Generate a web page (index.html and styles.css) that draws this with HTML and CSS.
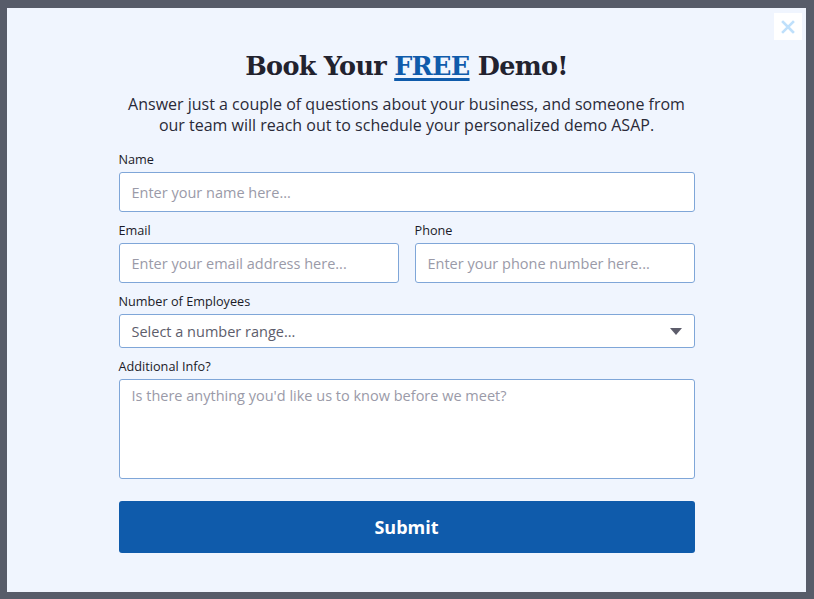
FILE: index.html
```html
<!DOCTYPE html>
<html lang="en">
<head>
  <meta charset="utf-8">
  <meta name="viewport" content="width=device-width, initial-scale=1">
  <title>Book Your FREE Demo</title>
  <link rel="stylesheet" href="styles.css">
</head>
<body>

<div class="modal">
  <button class="close" type="button" aria-label="Close">
    <svg width="14" height="14" viewBox="0 0 14 14"><path d="M2 2 L12 12 M12 2 L2 12" stroke="#bfe0fb" stroke-width="2.6" stroke-linecap="square"/></svg>
  </button>

  <h1 class="title">Book Your <a href="#">FREE</a> Demo!</h1>
  <p class="intro">Answer just a couple of questions about your business, and someone from our team will reach out to schedule your personalized demo ASAP.</p>

  <form class="form">
    <div class="field">
      <label for="name">Name</label>
      <input id="name" type="text" placeholder="Enter your name here...">
    </div>

    <div class="row">
      <div class="field">
        <label for="email">Email</label>
        <input id="email" type="text" placeholder="Enter your email address here...">
      </div>
      <div class="field">
        <label for="phone">Phone</label>
        <input id="phone" type="text" placeholder="Enter your phone number here...">
      </div>
    </div>

    <div class="field">
      <label for="employees">Number of Employees</label>
      <div class="select">
        <span>Select a number range...</span>
        <svg width="12" height="7" viewBox="0 0 12 7"><path d="M0 0 H12 L6 7 Z" fill="#5d5d6b"/></svg>
      </div>
    </div>

    <div class="field">
      <label for="info">Additional Info?</label>
      <textarea id="info" placeholder="Is there anything you'd like us to know before we meet?"></textarea>
    </div>

    <button class="submit" type="button">Submit</button>
  </form>
</div>

</body>
</html>
```

FILE: styles.css
```css
html, body {margin: 0; height: 100%;}
body {background: #575c69; padding: 8px 8px 7px 7px; box-sizing: border-box; font-family: "Open Sans", sans-serif; color: #22222e;}
.modal {position: relative; background: #f0f5fe; height: 584px; box-sizing: border-box; padding: 38px 0 0;}
.close {position: absolute; top: 5px; right: 4px; width: 28px; height: 27px; border: 0; background: #fff; padding: 0; display: flex; align-items: center; justify-content: center;}
.title {margin: 0; text-align: center; font-family: "DejaVu Serif", serif; font-weight: bold; font-size: 25.5px; line-height: 40px; color: #22222e; letter-spacing: -0.7px;}
.title a {color: #0f5bab; text-decoration: underline; text-decoration-thickness: 3px; text-underline-offset: 3px;}
.intro {margin: 8px auto 0; width: 580px; text-align: center; font-size: 16px; line-height: 21px; color: #2a2a38;}
.form {width: 576px; margin: 15px auto 0;}
.field {display: flex; flex-direction: column; margin-bottom: 10px;}
.field label {font-size: 12.7px; line-height: 17px; margin-bottom: 4px; color: #1b1b28;}
.row {display: grid; grid-template-columns: 1fr 1fr; gap: 16px;}
input, textarea, .select {font-family: "Open Sans", sans-serif; font-size: 14.5px; color: #22222e; background: #fff; border: 1px solid #7fa6d8; border-radius: 3px; box-sizing: border-box; padding: 0 12px;}
input {height: 40px;}
input::placeholder, textarea::placeholder {color: #9a9aa8;}
.select {height: 34px; display: flex; align-items: center; justify-content: space-between; color: #5d5d6b; padding-right: 12px;}
textarea {height: 100px; padding-top: 6px; resize: none;}
.submit {display: block; width: 100%; height: 52px; margin-top: 22px; border: 0; border-radius: 3px; background: #0f5bab; color: #fff; font-family: "Open Sans", sans-serif; font-weight: bold; font-size: 18px;}
```
